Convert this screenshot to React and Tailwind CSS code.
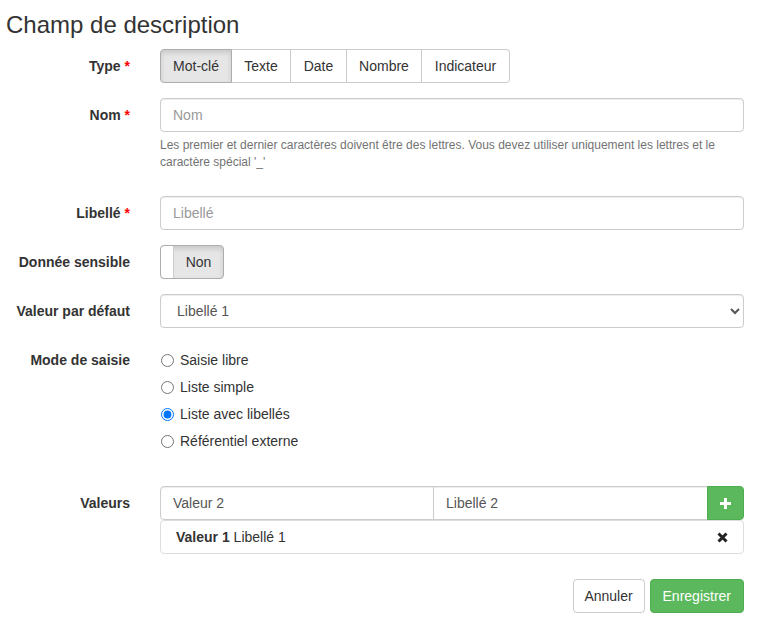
const Label = ({ children, required }) => (
  <div className="w-[145px] shrink-0 pr-[15px] pt-[7px] text-right font-bold leading-5">
    {children}
    {required && <span className="text-[#f00]"> *</span>}
  </div>
);

const Row = ({ label, required, className = "mb-[15px]", children }) => (
  <div className={`flex ${className}`}>
    <Label required={required}>{label}</Label>
    <div className="ml-[15px] w-[584px]">{children}</div>
  </div>
);

const inputCls =
  "block h-[34px] w-full rounded border border-[#ccc] bg-white px-3 text-[14px] text-[#555] shadow-[inset_0_1px_1px_rgba(0,0,0,0.075)] outline-none placeholder:text-[#999]";

const types = [
  { t: "Mot-clé", w: "w-[72px]" },
  { t: "Texte", w: "w-[59px]" },
  { t: "Date", w: "w-[56px]" },
  { t: "Nombre", w: "w-[75px]" },
  { t: "Indicateur", w: "w-[88px]" },
];
const modes = ["Saisie libre", "Liste simple", "Liste avec libellés", "Référentiel externe"];

const App = () => {
  return (
    <div className="min-h-[634px] bg-white pl-[6px] pt-[12px] font-['Liberation_Sans',Arial,sans-serif] text-[14px] text-[#333]">
      <h3 className="mb-[11px] text-[24px] leading-[26px] font-normal">Champ de description</h3>
      <div className="-ml-[6px] w-[759px]">
        <Row label="Type" required>
          <div className="flex">
            {types.map(({ t, w }, i) => (
              <button
                key={t}
                className={`h-[34px] ${w} border text-center leading-5 ${i > 0 ? "border-l-0" : ""} ${
                  i === 0
                    ? "rounded-l border-[#adadad] bg-[#e6e6e6] shadow-[inset_0_3px_5px_rgba(0,0,0,0.125)]"
                    : "border-[#ccc] bg-white"
                } ${i === types.length - 1 ? "rounded-r" : ""}`}
              >
                {t}
              </button>
            ))}
          </div>
        </Row>

        <Row label="Nom" required>
          <input className={inputCls} placeholder="Nom" />
          <p className="mt-[5px] mb-[10px] text-[12px] leading-[17px] text-[#737373]">
            Les premier et dernier caractères doivent être des lettres. Vous devez utiliser uniquement les lettres et le
            caractère spécial '_'
          </p>
        </Row>

        <Row label="Libellé" required>
          <input className={inputCls} placeholder="Libellé" />
        </Row>

        <Row label="Donnée sensible">
          <div className="flex h-[34px] w-[64px] overflow-hidden rounded border border-[#adadad] bg-[#e6e6e6] shadow-[inset_0_3px_5px_rgba(0,0,0,0.125)]">
            <span className="w-[13px] rounded-l border-r border-[#ccc] bg-white" />
            <span className="flex flex-1 items-center justify-center">Non</span>
          </div>
        </Row>

        <Row label="Valeur par défaut">
          <select className={`${inputCls} px-[12px]`} defaultValue="Libellé 1">
            <option>Libellé 1</option>
            <option>Libellé 2</option>
          </select>
        </Row>

        <Row label="Mode de saisie" className="mb-[35px]">
          <div className="flex flex-col gap-[7px] pt-[7px]">
            {modes.map((m, i) => (
              <label key={m} className="flex h-5 items-center gap-[6px] leading-5">
                <input type="radio" name="mode" defaultChecked={i === 2} className="m-0 ml-px h-[13px] w-[13px]" />
                {m}
              </label>
            ))}
          </div>
        </Row>

        <Row label="Valeurs" className="mb-[25px]">
          <div className="flex h-[34px]">
            <input
              className="h-full w-[274px] rounded-l border border-[#ccc] px-3 text-[#555] shadow-[inset_0_1px_1px_rgba(0,0,0,0.075)] outline-none"
              defaultValue="Valeur 2"
            />
            <input
              className="-ml-px h-full w-[275px] border border-[#ccc] px-3 text-[#555] shadow-[inset_0_1px_1px_rgba(0,0,0,0.075)] outline-none"
              defaultValue="Libellé 2"
            />
            <button className="-ml-px flex h-full flex-1 items-center justify-center rounded-r border border-[#4cae4c] bg-[#5cb85c]">
              <svg width="11" height="11" viewBox="0 0 11 11" fill="white">
                <rect x="4" y="0" width="3" height="11" />
                <rect x="0" y="4" width="11" height="3" />
              </svg>
            </button>
          </div>
          <div className="flex h-[34px] items-center justify-between rounded border border-[#ddd] bg-white px-[15px]">
            <span>
              <b>Valeur 1</b> Libellé 1
            </span>
            <svg width="11" height="11" viewBox="0 0 11 11" stroke="#222" strokeWidth="3" strokeLinecap="butt">
              <path d="M1.5 1.5 L9.5 9.5 M9.5 1.5 L1.5 9.5" />
            </svg>
          </div>
        </Row>

        <div className="flex justify-end gap-[5px] pr-[15px]">
          <button className="h-[34px] w-[72px] rounded border border-[#ccc] bg-white leading-5">Annuler</button>
          <button className="h-[34px] rounded border border-[#4cae4c] bg-[#5cb85c] px-3 leading-5 text-white">
            Enregistrer
          </button>
        </div>
      </div>
    </div>
  );
};

export default App;
